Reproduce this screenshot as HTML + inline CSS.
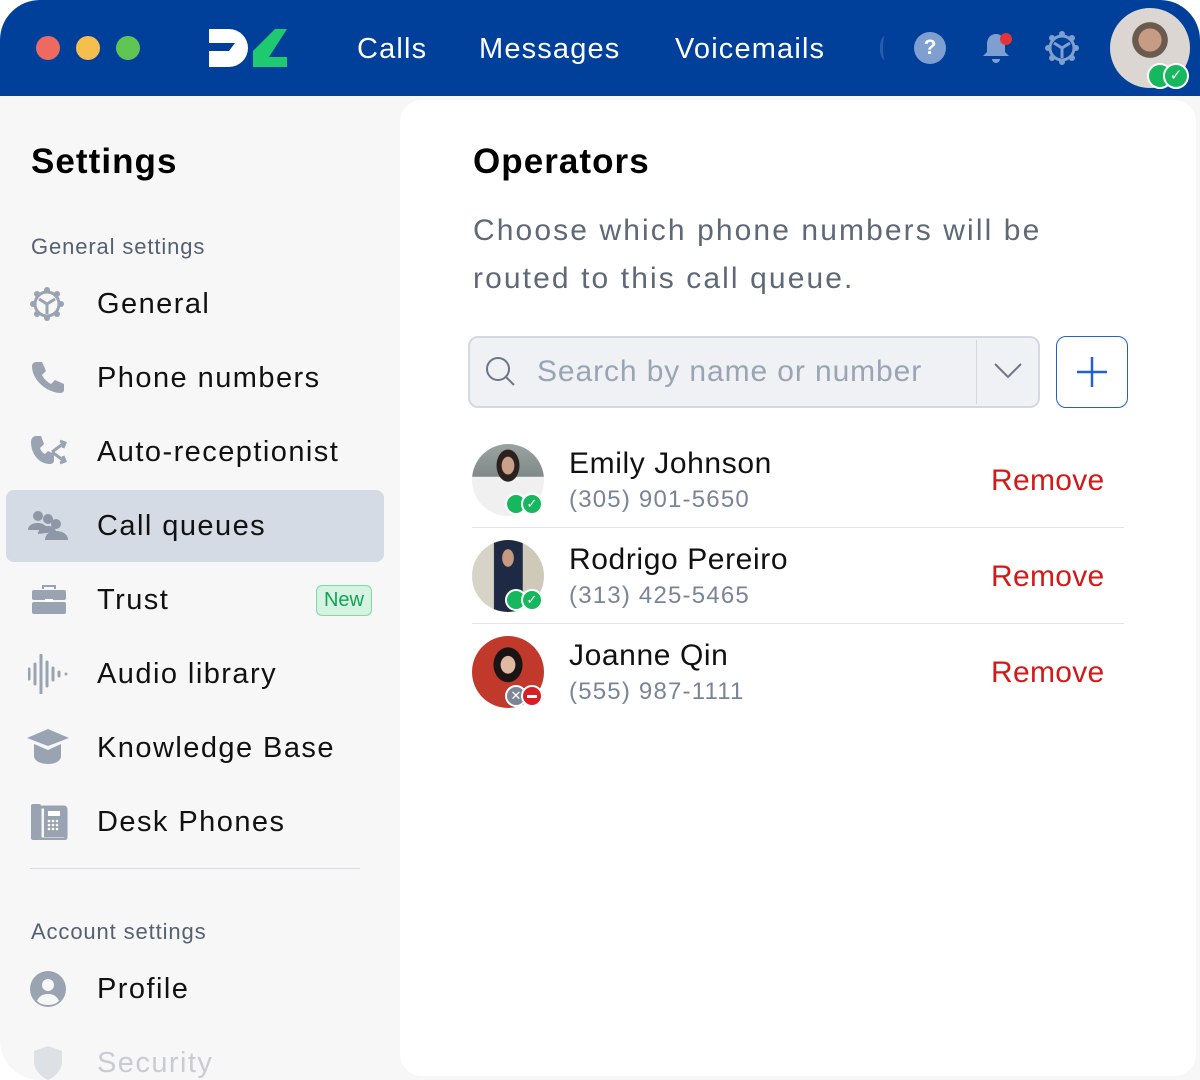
<!DOCTYPE html>
<html><head><meta charset="utf-8"><style>
*{box-sizing:border-box;margin:0;padding:0}
html,body{width:1200px;height:1080px;background:#fff;overflow:hidden;font-family:"Liberation Sans",sans-serif}
.win{position:absolute;left:0;top:0;width:1200px;height:1080px;border-radius:40px 40px 0 40px;overflow:hidden;background:#f7f7f8}
.top{position:absolute;left:0;top:0;width:1200px;height:96px;background:#003f9a}
.dot{position:absolute;top:36px;width:24px;height:24px;border-radius:50%}
.nav{position:absolute;top:33px;color:#fff;font-size:29px;letter-spacing:0.04em}
.main{position:absolute;left:400px;top:100px;width:796px;height:976px;background:#fff;border-radius:22px}
.side{position:absolute;left:0;top:96px;width:400px;height:984px}
.h1{position:absolute;font-weight:bold;font-size:35px;color:#000;letter-spacing:0.03em}
.lab{position:absolute;left:31px;font-size:22px;color:#566070;letter-spacing:0.04em}
.item{position:absolute;left:97px;font-size:29px;color:#111;letter-spacing:0.05em}
.ic{position:absolute;left:28px}
.name{position:absolute;left:569px;font-size:30px;color:#111;letter-spacing:0.02em}
.ph{position:absolute;left:569px;font-size:24px;color:#7a8497;letter-spacing:0.05em}
.rm{position:absolute;left:991px;font-size:30px;color:#d11a1a;letter-spacing:0.01em}
.av{position:absolute;left:472px;width:72px;height:72px;border-radius:50%}
.sep{position:absolute;left:472px;width:652px;height:1px;background:#e3e5e9}
.b{position:absolute;width:22px;height:22px;border-radius:50%;border:2px solid #fff}
</style></head><body>
<div class="win">
<div class="top">
 <div class="dot" style="left:36px;background:#ec6a5f"></div>
 <div class="dot" style="left:76px;background:#f4bf4f"></div>
 <div class="dot" style="left:116px;background:#61c554"></div>
 <svg style="position:absolute;left:209px;top:29px" width="80" height="38" viewBox="0 0 80 38"><path d="M0 0h20a19 19 0 0 1 0 38H0V22h20l6-8H0z" fill="#fff"/><path d="M44 38h34V28H60L78 0H66L44 22z" fill="#1ec96f"/></svg>
 <div class="nav" style="left:357px">Calls</div>
 <div class="nav" style="left:479px">Messages</div>
 <div class="nav" style="left:675px">Voicemails</div>
 <div style="position:absolute;left:880px;top:36px;width:10px;height:24px;border-left:3px solid #2a5bb0;border-radius:50%"></div>
 <div style="position:absolute;left:914px;top:32px;width:32px;height:32px;border-radius:50%;background:#7f9fd0;color:#fff;font-weight:bold;font-size:21px;text-align:center;line-height:32px">?</div>
 <svg style="position:absolute;left:980px;top:30px" width="34" height="36" viewBox="0 0 34 36"><path d="M16 4c-6 0-9 5-9 10v8l-4 4h26l-4-4v-8c0-5-3-10-9-10z" fill="#7f9fd0"/><path d="M12 29a4 4 0 0 0 8 0z" fill="#7f9fd0"/><circle cx="26" cy="9" r="6" fill="#e8323a"/></svg>
 <svg style="position:absolute;left:1044px;top:30px" width="36" height="36" viewBox="0 0 36 36"><g fill="none" stroke="#7f9fd0" stroke-width="3"><circle cx="18" cy="18" r="12"/><path d="M18 18l-8-5M18 18l8-5M18 18v10"/></g><g fill="#7f9fd0"><circle cx="18" cy="4" r="3"/><circle cx="18" cy="32" r="3"/><circle cx="4" cy="18" r="3"/><circle cx="32" cy="18" r="3"/><circle cx="8" cy="8" r="3"/><circle cx="28" cy="8" r="3"/><circle cx="8" cy="28" r="3"/><circle cx="28" cy="28" r="3"/></g></svg>
 <div style="position:absolute;left:1110px;top:8px;width:80px;height:80px;border-radius:50%;background:radial-gradient(circle at 50% 40%,#c89c84 0 18%,#6b5a4e 19% 28%,#dcd6d2 29%)"></div>
 <div class="b" style="left:1147px;top:63px;width:26px;height:26px;background:#16b85e"></div>
 <div class="b" style="left:1163px;top:63px;width:26px;height:26px;background:#16b85e;color:#fff;font-size:15px;text-align:center;line-height:22px">✓</div>
</div>
<div class="side"></div>
<div class="h1" style="left:31px;top:142px">Settings</div>
<div class="lab" style="top:234px">General settings</div>
<div style="position:absolute;left:6px;top:490px;width:378px;height:72px;background:#d5dbe4;border-radius:8px"></div>
<svg class="ic" style="top:286px" width="38" height="36" viewBox="0 0 36 36"><g fill="none" stroke="#9aa3b1" stroke-width="3"><circle cx="18" cy="18" r="12"/><path d="M18 18l-8-5M18 18l8-5M18 18v10"/></g><g fill="#9aa3b1"><circle cx="18" cy="4" r="3"/><circle cx="18" cy="32" r="3"/><circle cx="4" cy="18" r="3"/><circle cx="32" cy="18" r="3"/><circle cx="8" cy="8" r="3"/><circle cx="28" cy="8" r="3"/><circle cx="8" cy="28" r="3"/><circle cx="28" cy="28" r="3"/></g></svg>
<div class="item" style="top:288px">General</div>
<svg class="ic" style="top:360px;left:30px" width="36" height="36" viewBox="0 0 36 36"><path d="M6 2l6 0 4 9-4 4c2 4 5 7 9 9l4-4 9 4v6c0 2-2 3-4 3C15 32 2 19 2 6c0-2 2-4 4-4z" fill="#9aa3b1"/></svg>
<div class="item" style="top:362px">Phone numbers</div>
<svg class="ic" style="top:434px;left:30px" width="38" height="36" viewBox="0 0 38 36"><path d="M6 2h5l3 8-4 4c1 3 3 5 5 6l3-3 6 3v6c0 3-2 4-4 4C9 30 1 20 1 8c0-3 2-6 5-6z" fill="#9aa3b1"/><path d="M22 18l12-9M22 18l12 9M30 7l5 2-2 5M30 29l5-2-2-5" stroke="#9aa3b1" stroke-width="3" fill="none"/></svg>
<div class="item" style="top:436px">Auto-receptionist</div>
<svg class="ic" style="top:510px" width="42" height="30" viewBox="0 0 42 30"><g fill="#8e97a6"><circle cx="10" cy="6" r="5"/><circle cx="20" cy="9" r="5"/><circle cx="28" cy="14" r="5"/><path d="M0 20c0-5 5-7 10-7s9 3 9 7z"/><path d="M10 24c0-5 5-8 10-8s8 3 8 6z"/><path d="M17 30c0-6 5-9 11-9s12 3 12 9z"/></g></svg>
<div class="item" style="top:510px">Call queues</div>
<svg class="ic" style="top:585px;left:32px" width="34" height="30" viewBox="0 0 34 30"><path d="M11 4V1h12v3" stroke="#9aa3b1" stroke-width="2" fill="none"/><rect x="0" y="5" width="34" height="10" rx="2" fill="#9aa3b1"/><rect x="0" y="17" width="34" height="12" rx="2" fill="#9aa3b1"/><rect x="13" y="14" width="8" height="3" fill="#fff"/></svg>
<div class="item" style="top:584px">Trust</div>
<div style="position:absolute;left:316px;top:585px;width:56px;height:31px;border:1.5px solid #7ed9a7;background:#d6f3e2;border-radius:6px;color:#13a356;font-size:20px;text-align:center;line-height:28px">New</div>
<svg class="ic" style="top:654px" width="42" height="40" viewBox="0 0 42 40"><g stroke="#9aa3b1" stroke-width="3" stroke-linecap="round"><path d="M1 15v10M7 10v20M13 1v38M19 8v24M25 14v12M31 18v4M38 20v0"/></g></svg>
<div class="item" style="top:658px">Audio library</div>
<svg class="ic" style="top:728px;left:25px" width="46" height="40" viewBox="0 0 46 40"><path d="M23 1L44 10 23 18 2 10z" fill="#9aa3b1"/><path d="M9 16v12c0 5 7 8 14 8s13-3 13-8V16l-13 6z" fill="#9aa3b1"/></svg>
<div class="item" style="top:732px">Knowledge Base</div>
<svg class="ic" style="top:804px;left:30px" width="38" height="36" viewBox="0 0 38 36"><rect x="1" y="0" width="10" height="36" rx="2" fill="#9aa3b1"/><rect x="10" y="3" width="26" height="32" rx="2" fill="none" stroke="#9aa3b1" stroke-width="3"/><rect x="14" y="3" width="21" height="30" fill="#9aa3b1"/><g fill="#fff"><rect x="18" y="7" width="12" height="5"/><circle cx="19" cy="17" r="1.3"/><circle cx="23" cy="17" r="1.3"/><circle cx="27" cy="17" r="1.3"/><circle cx="19" cy="21" r="1.3"/><circle cx="23" cy="21" r="1.3"/><circle cx="27" cy="21" r="1.3"/><circle cx="19" cy="25" r="1.3"/><circle cx="23" cy="25" r="1.3"/><circle cx="27" cy="25" r="1.3"/></g></svg>
<div class="item" style="top:806px">Desk Phones</div>
<div style="position:absolute;left:30px;top:868px;width:330px;height:1px;background:#d6dce4"></div>
<div class="lab" style="top:919px">Account settings</div>
<svg class="ic" style="top:971px;left:30px" width="36" height="36" viewBox="0 0 36 36"><circle cx="18" cy="18" r="18" fill="#9aa3b1"/><circle cx="18" cy="14" r="6" fill="#f7f7f8"/><path d="M7 30c2-5 6-7 11-7s9 2 11 7c-3 3-7 4-11 4s-8-1-11-4z" fill="#f7f7f8"/></svg>
<div class="item" style="top:973px">Profile</div>
<svg class="ic" style="top:1046px;left:33px" width="30" height="34" viewBox="0 0 30 34"><path d="M15 0l14 5v10c0 9-7 16-14 19C8 31 1 24 1 15V5z" fill="#dde0e5"/></svg>
<div class="item" style="top:1047px;color:#c8ccd2">Security</div>

<div class="main"></div>
<div class="h1" style="left:473px;top:142px">Operators</div>
<div style="position:absolute;left:473px;top:207px;width:620px;font-size:30px;line-height:48px;color:#5f6877;letter-spacing:0.07em">Choose which phone numbers will be routed to this call queue.</div>
<div style="position:absolute;left:468px;top:336px;width:572px;height:72px;background:#eff1f5;border:2px solid #d4d9e1;border-radius:10px"></div>
<svg style="position:absolute;left:485px;top:356px" width="32" height="32" viewBox="0 0 32 32"><circle cx="13" cy="13" r="11" fill="none" stroke="#6b7585" stroke-width="2"/><path d="M21 21l8 8" stroke="#6b7585" stroke-width="2"/></svg>
<div style="position:absolute;left:537px;top:355px;font-size:30px;color:#9ba4b4;letter-spacing:0.03em">Search by name or number</div>
<div style="position:absolute;left:976px;top:340px;width:1px;height:64px;background:#d4d9e1"></div>
<svg style="position:absolute;left:994px;top:363px" width="28" height="16" viewBox="0 0 28 16"><path d="M1 1l13 13L27 1" fill="none" stroke="#6b7585" stroke-width="2"/></svg>
<div style="position:absolute;left:1056px;top:336px;width:72px;height:72px;border:1.5px solid #2160d3;border-radius:10px"></div>
<svg style="position:absolute;left:1076px;top:356px" width="32" height="32" viewBox="0 0 32 32"><path d="M16 1v30M1 16h30" stroke="#2160d3" stroke-width="2.5"/></svg>

<div class="av" style="top:444px;background:radial-gradient(ellipse at 50% 30%,#c9a089 0 12%,#2b211c 13% 22%,transparent 23%),linear-gradient(#9aa3a0,#7f8a88 45%,#f0f0f0 46%)"></div>
<div class="b" style="left:505px;top:493px;background:#16b85e"></div>
<div class="b" style="left:521px;top:493px;background:#16b85e;color:#fff;font-size:13px;text-align:center;line-height:18px">✓</div>
<div class="name" style="top:447px">Emily Johnson</div>
<div class="ph" style="top:486px">(305) 901-5650</div>
<div class="rm" style="top:464px">Remove</div>
<div class="sep" style="top:527px"></div>

<div class="av" style="top:540px;background:radial-gradient(ellipse at 50% 25%,#c59a80 0 11%,transparent 12%),linear-gradient(90deg,#d7d3c6 0 30%,#1e2a44 31% 70%,#cfc9ba 71%)"></div>
<div class="b" style="left:505px;top:589px;background:#16b85e"></div>
<div class="b" style="left:521px;top:589px;background:#16b85e;color:#fff;font-size:13px;text-align:center;line-height:18px">✓</div>
<div class="name" style="top:543px">Rodrigo Pereiro</div>
<div class="ph" style="top:582px">(313) 425-5465</div>
<div class="rm" style="top:560px">Remove</div>
<div class="sep" style="top:623px"></div>

<div class="av" style="top:636px;background:radial-gradient(ellipse at 50% 40%,#e0b9a2 0 14%,#1a1414 15% 28%,#c0392b 29%)"></div>
<div class="b" style="left:505px;top:685px;background:#7d8696;color:#fff;font-size:13px;text-align:center;line-height:18px">✕</div>
<div class="b" style="left:521px;top:685px;background:#d81f26"><div style="position:absolute;left:4px;top:8px;width:10px;height:3px;background:#fff"></div></div>
<div class="name" style="top:639px">Joanne Qin</div>
<div class="ph" style="top:678px">(555) 987-1111</div>
<div class="rm" style="top:656px">Remove</div>
</div>
</body></html>
